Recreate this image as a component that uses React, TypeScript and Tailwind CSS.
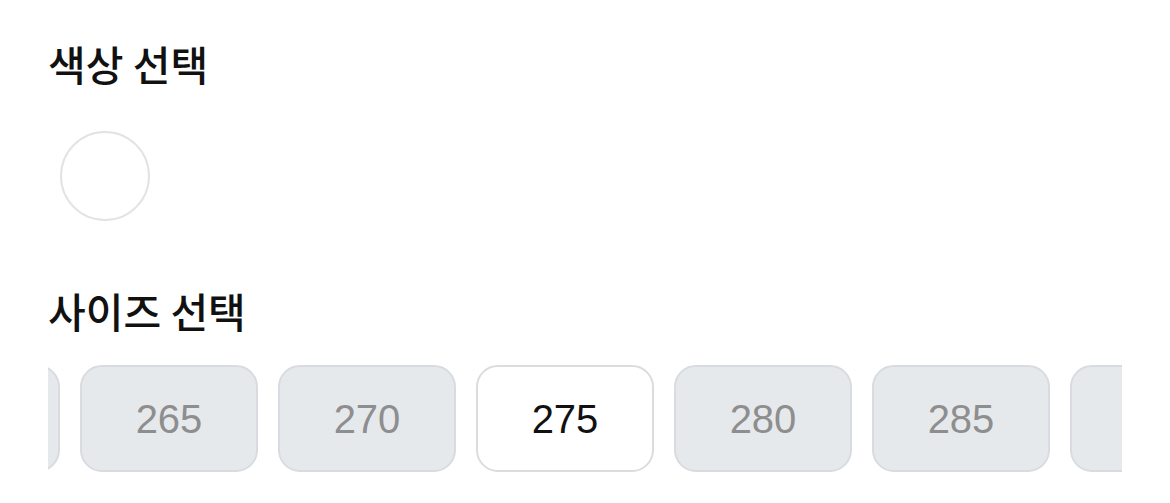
import React from 'react';

const SIZES = [260, 265, 270, 275, 280, 285, 290];
const SELECTED = 275;

export default function App() {
  return (
    <div
      className="w-[1170px] h-[503px] bg-white overflow-hidden pl-[48px] pr-[48px] pt-[34px]"
      style={{ fontFamily: '"Noto Sans CJK KR", "Noto Sans", sans-serif' }}
    >
      <h2 className="m-0 text-[41px] leading-[58px] font-medium text-[#111]">색상 선택</h2>

      <div className="mt-[39px] pl-[12px]">
        <button
          type="button"
          className="block w-[90px] h-[90px] rounded-full bg-white border-2 border-[#e3e3e3]"
        />
      </div>

      <h2 className="mt-[60px] m-0 text-[41px] leading-[58px] font-medium text-[#111]">사이즈 선택</h2>

      <div className="mt-[26px] w-[1074px] overflow-hidden">
        <div className="flex gap-[20px] -ml-[166px]">
          {SIZES.map((size) => {
            const active = size === SELECTED;
            return (
              <button
                key={size}
                type="button"
                className={
                  active
                    ? 'shrink-0 w-[178px] h-[107px] rounded-[22px] border-2 border-[#dcdcdc] bg-white text-[#111] text-[40px] flex items-center justify-center'
                    : 'shrink-0 w-[178px] h-[107px] rounded-[22px] border-2 border-[#d8dbdf] bg-[#e6e9ec] text-[#8e8e8e] text-[40px] flex items-center justify-center'
                }
                style={{ fontFamily: '"Liberation Sans", Arial, sans-serif' }}
              >
                {size}
              </button>
            );
          })}
        </div>
      </div>
    </div>
  );
}
